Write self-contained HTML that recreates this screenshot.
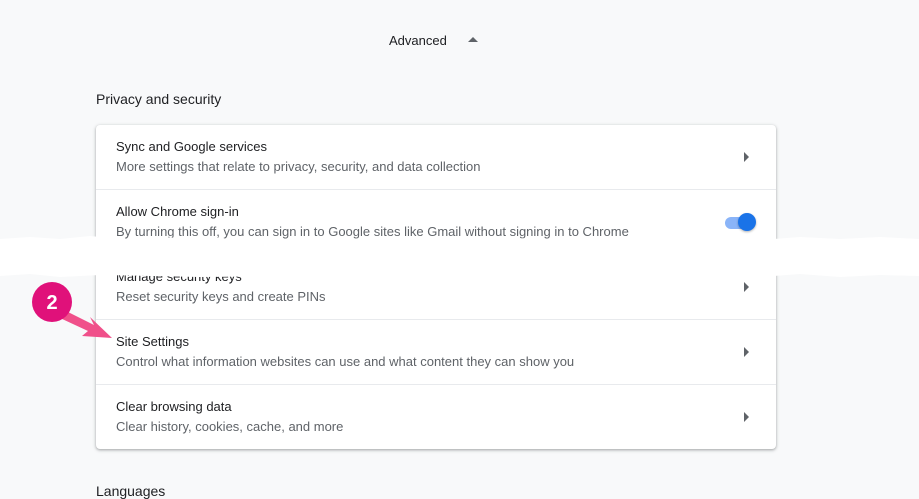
<!DOCTYPE html>
<html><head><style>
body{margin:0;width:919px;height:496px;background:#f8f9fa;font-family:"Liberation Sans",sans-serif;position:relative;overflow:hidden}
.abs{position:absolute}
.card{left:96px;top:125px;width:680px;height:324px;background:#fff;border-radius:4px;box-shadow:0 1px 2px rgba(60,64,67,.3),0 1px 3px 1px rgba(60,64,67,.15)}
.t{position:absolute;left:20px;font-size:13px;color:#202124}
.s{position:absolute;left:20px;font-size:13px;color:#5f6368}
.sep{position:absolute;left:0;right:0;height:1px;background:#e8eaed}
.arr{position:absolute;left:648px;width:0;height:0;border-left:5px solid #5f6368;border-top:5px solid transparent;border-bottom:5px solid transparent}
</style></head><body>
<div class="abs" style="left:389px;top:33px;font-size:13px;color:#202124">Advanced</div>
<div class="abs" style="left:468px;top:37px;width:0;height:0;border-bottom:5px solid #5f6368;border-left:5px solid transparent;border-right:5px solid transparent"></div>
<div class="abs" style="left:96px;top:91px;font-size:14px;color:#202124">Privacy and security</div>
<div class="abs card">
 <div class="t" style="top:14px">Sync and Google services</div>
 <div class="s" style="top:34px">More settings that relate to privacy, security, and data collection</div>
 <div class="arr" style="top:27px"></div>
 <div class="sep" style="top:64px"></div>
 <div class="t" style="top:79px">Allow Chrome sign-in</div>
 <div class="s" style="top:99px">By turning this off, you can sign in to Google sites like Gmail without signing in to Chrome</div>
 <div class="abs" style="left:629px;top:92px;width:30px;height:12px;border-radius:6px;background:#8ab4f8"></div>
 <div class="abs" style="left:642px;top:88px;width:18px;height:18px;border-radius:50%;background:#1a73e8;box-shadow:0 1px 2px rgba(0,0,0,.3)"></div>
 <div class="t" style="top:144px">Manage security keys</div>
 <div class="s" style="top:164px">Reset security keys and create PINs</div>
 <div class="arr" style="top:157px"></div>
 <div class="sep" style="top:194px"></div>
 <div class="t" style="top:209px">Site Settings</div>
 <div class="s" style="top:229px">Control what information websites can use and what content they can show you</div>
 <div class="arr" style="top:222px"></div>
 <div class="sep" style="top:259px"></div>
 <div class="t" style="top:274px">Clear browsing data</div>
 <div class="s" style="top:294px">Clear history, cookies, cache, and more</div>
 <div class="arr" style="top:287px"></div>
</div>
<svg class="abs" style="left:0;top:230px" width="919" height="55"><path d="M0 9 L30 7 L60 9 L90 6 L120 9 L160 7 L200 9 L240 8 L300 9 L400 8 L460 9 L500 8 L600 9 L700 8 L760 10 L800 7 L840 9 L880 7 L919 9 L919 46 L880 45 L840 47 L800 44 L760 47 L700 46 L600 47 L500 46 L400 47 L300 46 L200 47 L100 45 L60 47 L30 44 L0 46 Z" fill="#fff"/></svg>
<svg class="abs" style="left:30px;top:280px" width="90" height="65">
<path d="M34 30 L64 45 L60 37 L82 58 L52 56 L58 51 L30 38 Z" fill="#f0508a"/>
<circle cx="22" cy="22" r="20" fill="#e0117a"/>
<text x="22" y="29" font-family="Liberation Sans" font-weight="bold" font-size="20" fill="#fff" text-anchor="middle">2</text>
</svg>
<div class="abs" style="left:96px;top:483px;font-size:14px;color:#202124">Languages</div>
</body></html>
